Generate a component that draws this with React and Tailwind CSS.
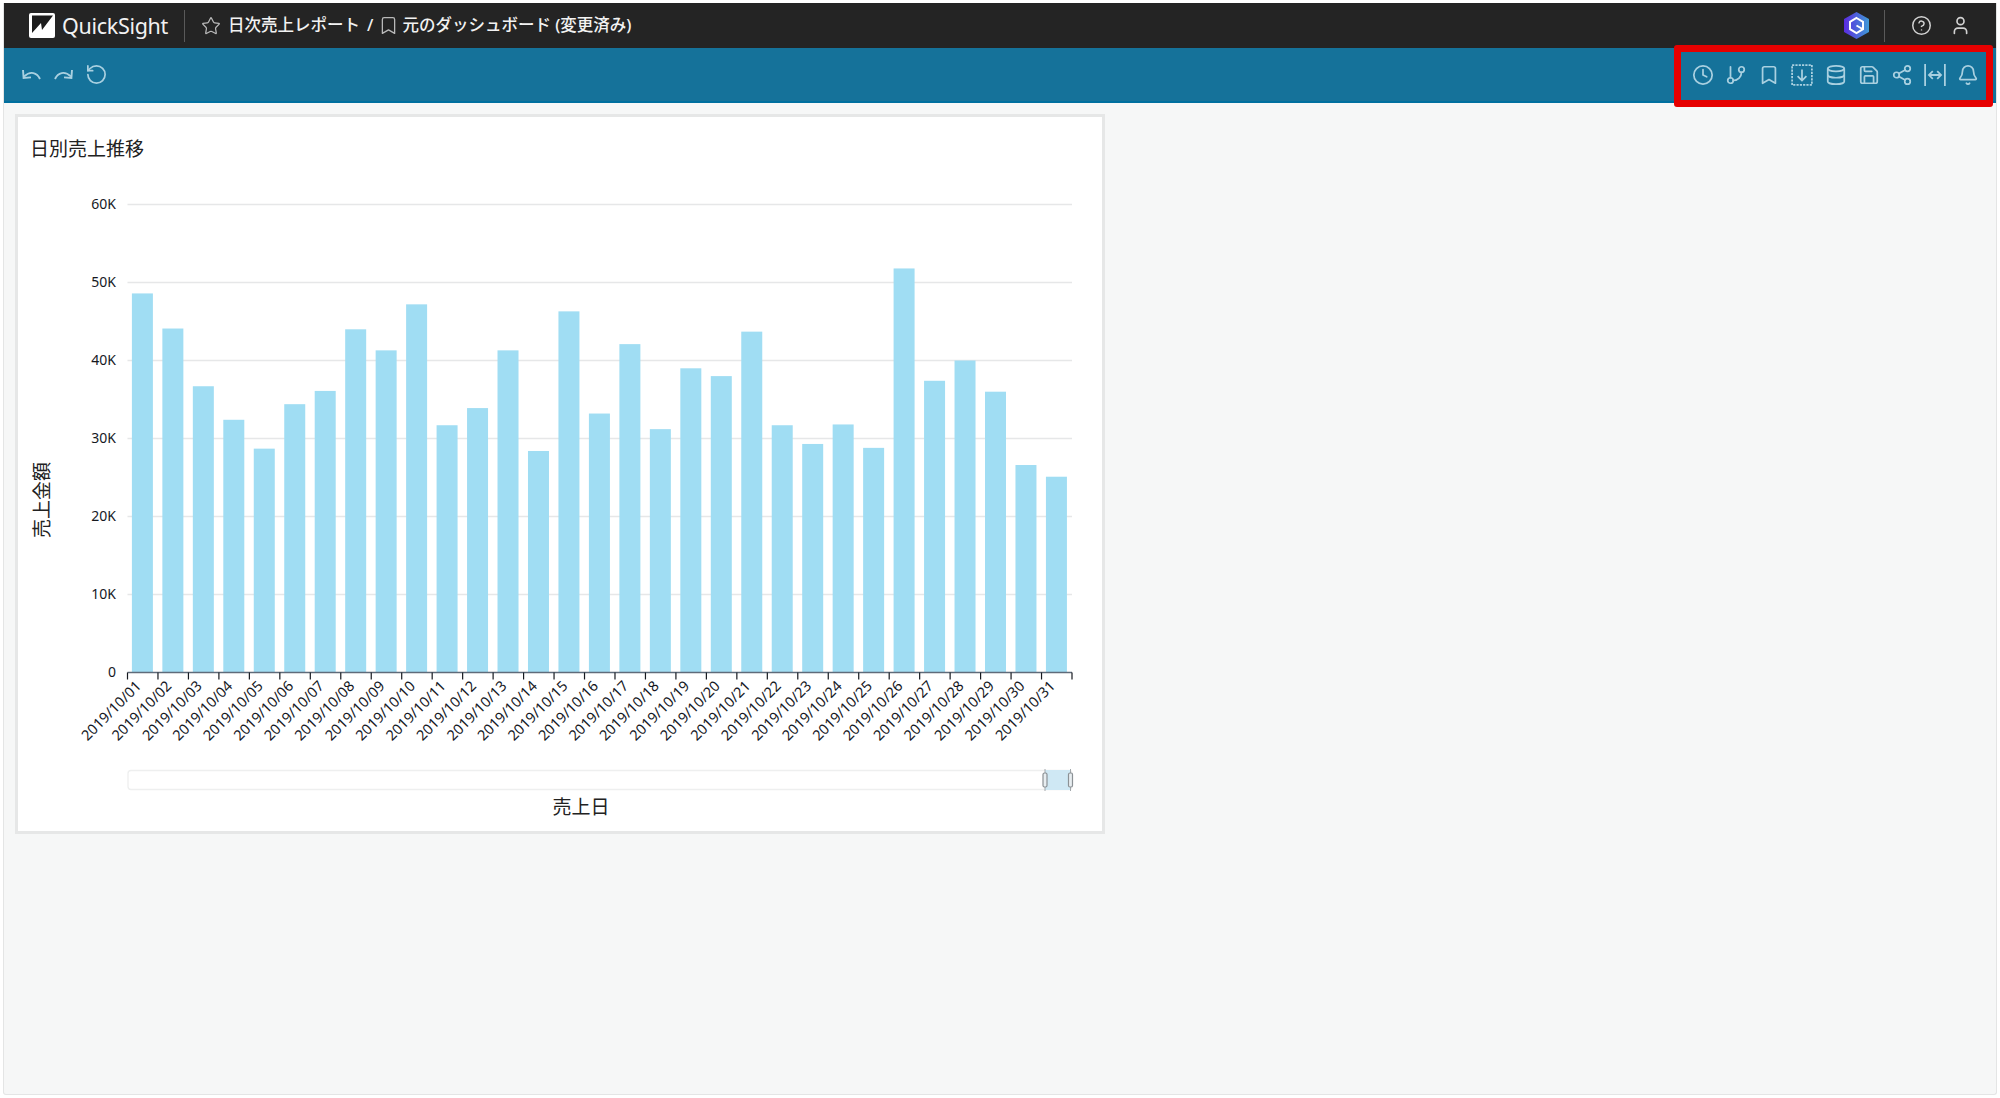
import {
    Bell,
    Bookmark,
    CircleHelp,
    Clock,
    Database,
    GitBranch,
    RotateCcw,
    Save,
    Share2,
    Star,
    User,
} from 'lucide-react';

const JP_FONT = "font-['Noto_Sans','Noto_Sans_CJK_JP',sans-serif]";

// bar heights read as sales in K
const SALES = [
    48.6, 44.1, 36.7, 32.4, 28.7, 34.4, 36.1, 44.0, 41.3, 47.2, 31.7, 33.9, 41.3, 28.4, 46.3, 33.2,
    42.1, 31.2, 39.0, 38.0, 43.7, 31.7, 29.3, 31.8, 28.8, 51.8, 37.4, 40.0, 36.0, 26.6, 25.1,
];

const Y_TICKS = [0, 10, 20, 30, 40, 50, 60];

const PLOT_LEFT = 127.5;
const PLOT_RIGHT = 1072;
const PLOT_BOTTOM = 672.5;
const PX_PER_K = 7.8;
const STEP = (PLOT_RIGHT - PLOT_LEFT) / SALES.length;

function QuickSightLogo() {
    return (
        <svg viewBox="0 0 26 25" className="h-[25px] w-[26px]">
            <rect width="26" height="25" rx="2" fill="#ffffff" />
            <polygon points="3,2.5 24,2.5 13,17 12,10 3,20" fill="#1c1c1c" />
        </svg>
    );
}

function HexLogo() {
    return (
        <svg viewBox="0 0 25 27" className="h-[27px] w-[25px]">
            <defs>
                <linearGradient id="hex-fill" x1="0" y1="0" x2="1" y2="0">
                    <stop offset="0" stopColor="#5b2be0" />
                    <stop offset="1" stopColor="#3f9ad6" />
                </linearGradient>
            </defs>
            <polygon points="12.5,0 25,7 25,20 12.5,27 0,20 0,7" fill="url(#hex-fill)" />
            <polygon
                points="12.5,6 19,9.8 19,17.2 12.5,21 6,17.2 6,9.8"
                fill="none"
                stroke="#ffffff"
                strokeWidth="2"
            />
            <path d="M12.5 13.5l6 3.5" stroke="#ffffff" strokeWidth="2" />
        </svg>
    );
}

function UndoArrow({ className }) {
    return (
        <svg viewBox="0 0 20 13" fill="none" stroke="currentColor" strokeWidth="1.9" className={className}>
            <path d="M19 11C16 4.5 9.500 2.500 3 8.500" />
            <path d="M2 2l.6 8 7.400-.6" />
        </svg>
    );
}

function RedoArrow({ className }) {
    return <UndoArrow className={`-scale-x-100 ${className}`} />;
}

function DownloadBox({ className }) {
    return (
        <svg viewBox="0 0 20 20" fill="none" stroke="currentColor" strokeWidth="1.6" className={className}>
            <path d="M1 1h18v18H1z" strokeDasharray="2 1" />
            <path d="M10 5v10M6 11l4 4 4-4" />
        </svg>
    );
}

function FitWidth({ className }) {
    return (
        <svg viewBox="0 0 20 20" fill="none" stroke="currentColor" strokeWidth="1.6" className={className}>
            <path d="M1 0v20M19 0v20M4.500 10h11M8 6.500L4.500 10 8 13.500M12 6.500l3.500 3.500-3.500 3.500" />
        </svg>
    );
}

const RIGHT_ACTIONS = [Clock, GitBranch, Bookmark, DownloadBox, Database, Save, Share2, FitWidth, Bell];

function SalesChart() {
    return (
        <svg viewBox="18 162 1084 669" className="h-[669px] w-[1084px]" fontFamily="'Noto Sans','Noto Sans CJK JP',sans-serif">
            {Y_TICKS.map((tick) => {
                const y = PLOT_BOTTOM - tick * PX_PER_K;
                return (
                    <g key={tick}>
                        {tick > 0 && <line x1={PLOT_LEFT} x2={PLOT_RIGHT} y1={y} y2={y} stroke="#e6e7e8" strokeWidth="1.3" />}
                        <text x="116" y={y + 0.5} textAnchor="end" dominantBaseline="middle" fontSize="14" fill="#16191f">
                            {tick > 0 ? `${tick}K` : '0'}
                        </text>
                    </g>
                );
            })}

            {SALES.map((value, index) => {
                const height = value * PX_PER_K;
                const left = PLOT_LEFT + index * STEP;
                const day = String(index + 1).padStart(2, '0');
                return (
                    <g key={day}>
                        <rect x={left + 4.4} y={PLOT_BOTTOM - height} width="21" height={height} fill="#a0ddf3" />
                        <text
                            textAnchor="end"
                            fontSize="14.5"
                            fill="#16191f"
                            transform={`translate(${left + 14.500} 687) rotate(-45)`}
                        >
                            2019/10/{day}
                        </text>
                    </g>
                );
            })}

            <line x1={PLOT_LEFT} x2={PLOT_RIGHT} y1={PLOT_BOTTOM} y2={PLOT_BOTTOM} stroke="#5f6b7a" strokeWidth="1.5" />
            {Array.from({ length: SALES.length + 1 }, (_, index) => {
                const x = PLOT_LEFT + index * STEP;
                return <line key={index} x1={x} x2={x} y1={PLOT_BOTTOM} y2={PLOT_BOTTOM + 7} stroke="#16191f" strokeWidth="1.2" />;
            })}

            <text
                textAnchor="middle"
                dominantBaseline="middle"
                fontSize="19"
                fill="#222222"
                transform="translate(44 500) rotate(-90)"
            >
                売上金額
            </text>

            {/* range slider */}
            <rect x="128" y="770.5" width="944" height="19" rx="3" fill="#ffffff" stroke="#eeefef" strokeWidth="1.3" />
            <rect x="1045" y="770" width="26" height="20" fill="#cfe8f4" />
            {[1045, 1070.5].map((x) => (
                <g key={x}>
                    <line x1={x} x2={x} y1="769" y2="791" stroke="#a3a8ac" strokeWidth="1" />
                    <rect x={x - 2} y="773" width="4" height="14" rx="1.5" fill="#e8eef1" stroke="#8b9195" strokeWidth="1.2" />
                </g>
            ))}

            <text x="581" y="809" textAnchor="middle" dominantBaseline="middle" fontSize="19" fill="#222222">
                売上日
            </text>
        </svg>
    );
}

export default function App() {
    return (
        <div className={`h-[1098px] w-[2000px] overflow-hidden bg-white pt-[3px] pr-[3px] pb-[3px] pl-[3px] ${JP_FONT}`}>
            <div className="relative flex h-full flex-col overflow-hidden rounded-b-[3px] border-x border-b border-[#e4e5e5] bg-[#f6f7f7]">
                <header className="flex h-[45px] shrink-0 items-center bg-[#242424] pl-[25px] pr-[25px] text-[#f2f2f2]">
                    <QuickSightLogo />
                    <span className="ml-[7px] text-[21.5px] leading-none tracking-[-0.3px]">QuickSight</span>
                    <span className="ml-[16px] h-[32px] w-px bg-[#5a5a5a]" />
                    <Star className="ml-[16px] size-[20px] text-[#b9b9b9]" strokeWidth={1.5} />
                    <span className="ml-[7px] text-[16.5px] font-medium">日次売上レポート</span>
                    <span className="ml-[7px] text-[16.5px] font-medium">/</span>
                    <Bookmark className="ml-[5px] size-[21px] text-[#b9b9b9]" strokeWidth={1.5} />
                    <span className="ml-[3px] text-[16.5px] font-medium">元のダッシュボード (変更済み)</span>
                    <div className="ml-auto flex items-center">
                        <HexLogo />
                        <span className="ml-[15px] h-[32px] w-px bg-[#5a5a5a]" />
                        <CircleHelp className="ml-[26px] size-[21px] text-[#d2d2d2]" strokeWidth={1.7} />
                        <User className="ml-[18px] size-[21px] text-[#d2d2d2]" strokeWidth={1.9} />
                    </div>
                </header>

                <div className="flex h-[55px] shrink-0 items-center justify-between border-b-2 border-[#006f9f] bg-[#15729a] pl-[10px] pr-[11px] text-[#a9d0e0]">
                    <div className="flex items-center">
                        <span className="flex h-[33px] w-[33px] items-center justify-center">
                            <UndoArrow className="h-[13px] w-[20px]" />
                        </span>
                        <span className="flex h-[33px] w-[33px] items-center justify-center">
                            <RedoArrow className="h-[13px] w-[20px]" />
                        </span>
                        <span className="flex h-[33px] w-[33px] items-center justify-center">
                            <RotateCcw className="size-[23px]" strokeWidth={1.8} />
                        </span>
                    </div>
                    <div className="flex items-center">
                        {RIGHT_ACTIONS.map((Icon, index) => (
                            <span key={index} className="flex h-[33px] w-[33.2px] items-center justify-center">
                                <Icon className="size-[22px]" strokeWidth={1.9} />
                            </span>
                        ))}
                    </div>
                </div>

                {/* annotation frame around the right actions */}
                <div className="absolute top-[42px] right-[3px] h-[62px] w-[319px] rounded-[3px] border-[7px] border-[#e60000]" />

                <section className="ml-[11px] mt-[11px] h-[720px] w-[1090px] border-[3px] border-[#e6e7e7] bg-white">
                    <h2 className="pl-[12px] pt-[19px] text-[19px] font-normal leading-[26px] text-[#222222]">日別売上推移</h2>
                    <SalesChart />
                </section>
            </div>
        </div>
    );
}
